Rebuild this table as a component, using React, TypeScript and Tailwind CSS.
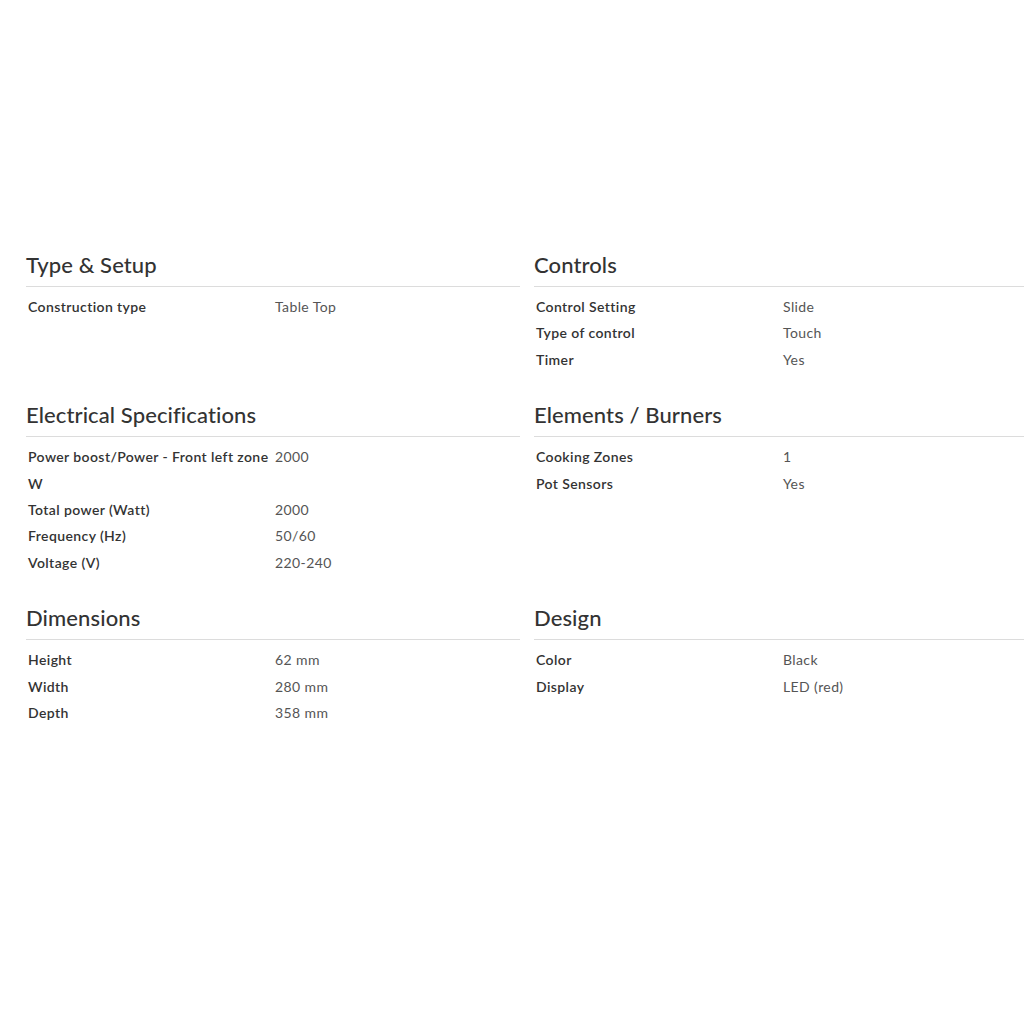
import React from 'react';

type Spec = { label: string; value: string };
type Section = { title: string; specs: Spec[] };

const sections: Section[] = [
  { title: 'Type & Setup', specs: [{ label: 'Construction type', value: 'Table Top' }] },
  {
    title: 'Controls',
    specs: [
      { label: 'Control Setting', value: 'Slide' },
      { label: 'Type of control', value: 'Touch' },
      { label: 'Timer', value: 'Yes' },
    ],
  },
  {
    title: 'Electrical Specifications',
    specs: [
      { label: 'Power boost/Power - Front left zone W', value: '2000' },
      { label: 'Total power (Watt)', value: '2000' },
      { label: 'Frequency (Hz)', value: '50/60' },
      { label: 'Voltage (V)', value: '220-240' },
    ],
  },
  {
    title: 'Elements / Burners',
    specs: [
      { label: 'Cooking Zones', value: '1' },
      { label: 'Pot Sensors', value: 'Yes' },
    ],
  },
  {
    title: 'Dimensions',
    specs: [
      { label: 'Height', value: '62 mm' },
      { label: 'Width', value: '280 mm' },
      { label: 'Depth', value: '358 mm' },
    ],
  },
  {
    title: 'Design',
    specs: [
      { label: 'Color', value: 'Black' },
      { label: 'Display', value: 'LED (red)' },
    ],
  },
];

function SpecSection({ section }: { section: Section }) {
  return (
    <div className="mb-[28px]">
      <h2 className="text-[22px] leading-[28px] text-[#333] pb-[7px] border-b border-[#dcdcdc] font-medium tracking-[0.1px]">
        {section.title}
      </h2>
      <div className="pt-[7px]">
        {section.specs.map((s) => (
          <div key={s.label} className="grid grid-cols-2 text-[14px] leading-[26.4px]">
            <div className="pl-[2px] pr-[4px] text-[#333] font-semibold tracking-[0.4px]">{s.label}</div>
            <div className="pl-[2px] text-[#555] font-normal tracking-[0.4px]">{s.value}</div>
          </div>
        ))}
      </div>
    </div>
  );
}

export default function App() {
  return (
    <div className="min-h-[1024px] w-[1024px] bg-white overflow-hidden font-[Lato,sans-serif]">
      <div className="pt-[251px] pl-[26px] w-[1030px] grid grid-cols-2 gap-x-[14px] pr-[2px]">
        {sections.map((s) => (
          <SpecSection key={s.title} section={s} />
        ))}
      </div>
    </div>
  );
}
